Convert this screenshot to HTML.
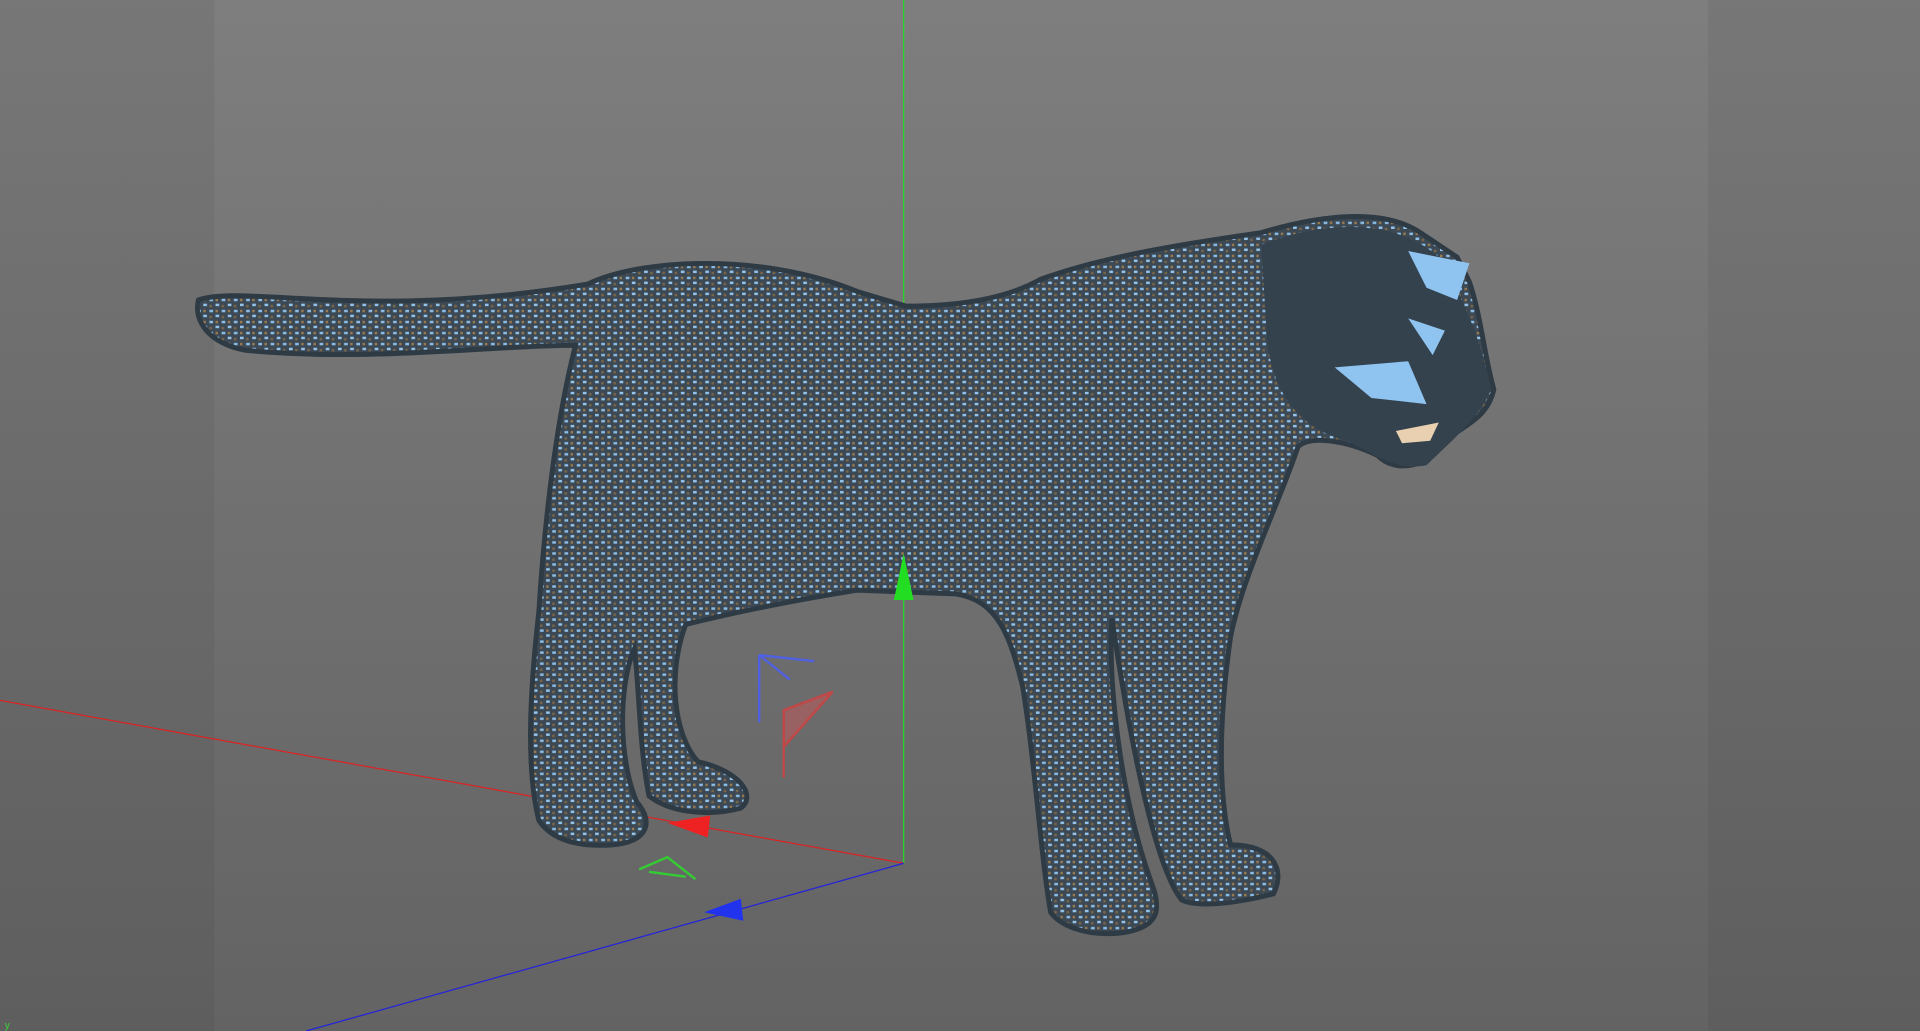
<!DOCTYPE html>
<html><head><meta charset="utf-8"><style>
html,body{margin:0;padding:0;width:1920px;height:1031px;overflow:hidden;background:#6e6e6e}
svg{display:block}
</style></head><body>
<svg width="1920" height="1031" viewBox="0 0 1568 842" preserveAspectRatio="none">
<defs>
<linearGradient id="bg" x1="0" y1="0" x2="0" y2="1">
<stop offset="0" stop-color="#7e7e7e"/><stop offset="1" stop-color="#636363"/>
</linearGradient>
<linearGradient id="side" x1="0" y1="0" x2="0" y2="1">
<stop offset="0" stop-color="#777"/><stop offset="1" stop-color="#5e5e5e"/>
</linearGradient>
<pattern id="fur" width="10" height="9" patternUnits="userSpaceOnUse">
<rect width="10" height="9" fill="#3c4954"/>
<rect x="1" y="1" width="3" height="2" fill="#8cbde6"/>
<rect x="6" y="5" width="3" height="2" fill="#95c4ec"/>
<rect x="6" y="1" width="2" height="2" fill="#9a7a4e"/>
<rect x="1" y="6" width="2" height="2" fill="#7d6646"/>
</pattern>
</defs>
<rect width="1568" height="842" fill="url(#side)"/>
<rect x="175" width="1220" height="842" fill="url(#bg)"/>
<line x1="738" y1="0" x2="738" y2="705" stroke="#22dd22" stroke-width="1"/>
<line x1="0" y1="572" x2="738" y2="705" stroke="#dd2222" stroke-width="1"/>
<line x1="738" y1="705" x2="250" y2="842" stroke="#2222dd" stroke-width="1"/>
<path d="M162,245 C200,232 300,262 480,232 C520,212 620,205 700,238 L740,250 C780,250 820,245 850,228 C900,210 960,200 1030,190 C1080,175 1130,170 1160,190 L1190,210 L1200,230 C1210,260 1212,290 1220,318 C1215,340 1200,345 1180,360 C1170,380 1140,388 1125,372 C1100,360 1070,355 1060,365 C1045,410 1015,470 1005,520 C995,590 995,650 1005,690 C1040,690 1050,710 1040,730 C1000,740 975,740 965,735 C945,710 925,620 908,505 C905,560 915,650 940,720 C950,745 945,758 915,762 C885,765 865,755 858,745 C850,700 845,620 835,560 C825,520 815,490 780,485 L700,482 C650,490 600,500 560,510 C545,550 550,600 570,622 C605,630 618,650 605,660 C575,668 545,662 530,650 C522,610 522,560 518,530 C505,560 505,620 520,655 C535,672 528,688 500,690 C470,692 450,685 440,670 C430,630 432,570 440,500 C445,420 455,340 470,282 C400,282 300,296 200,286 C170,280 158,262 162,245 Z" fill="url(#fur)" stroke="#2e3a44" stroke-width="4"/>
<path d="M1030,200 C1080,180 1140,178 1175,210 C1200,250 1212,290 1218,318 C1205,345 1185,360 1165,380 C1140,385 1120,370 1100,360 C1060,350 1040,320 1035,280 Z" fill="#34424e"/>
<path d="M1150,205 L1200,215 L1190,245 L1165,235 Z M1090,300 L1150,295 L1165,330 L1120,325 Z M1150,260 L1180,270 L1170,290 Z" fill="#8fc4f0"/>
<path d="M1140,352 L1175,345 L1168,360 L1145,362 Z" fill="#e8d0b0"/>
<polygon points="738,452 730,490 746,490" fill="#22dd22"/>
<polygon points="545,672 580,666 578,684" fill="#ee2222"/>
<polygon points="575,745 605,734 607,752" fill="#2233ee"/>
<path d="M620,535 L665,540 M620,535 L620,590 M620,535 L645,555" stroke="#5060e0" stroke-width="2" fill="none"/>
<path d="M640,580 L680,565 L640,610 Z M640,580 L640,635" stroke="#c04848" stroke-width="2" fill="#b85a5a" fill-opacity="0.6"/>
<path d="M522,710 L545,700 L568,718 M530,712 L560,716" stroke="#33cc33" stroke-width="2" fill="none"/>
<text x="4" y="840" font-family="Liberation Sans, sans-serif" font-size="8" fill="#33dd33">y</text>
</svg>
</body></html>
